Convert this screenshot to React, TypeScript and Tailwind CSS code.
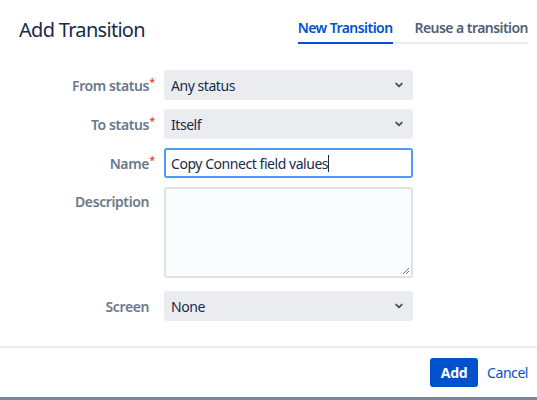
import { ReactNode } from "react";

const font = { fontFamily: '"Noto Sans", "Segoe UI", sans-serif' };

function Chevron() {
  return (
    <svg width="10" height="10" viewBox="0 0 10 10" className="shrink-0">
      <path
        d="M2.2 3.6 L5 6.4 L7.8 3.6"
        fill="none"
        stroke="#42526e"
        strokeWidth="1.9"
        strokeLinecap="round"
        strokeLinejoin="round"
      />
    </svg>
  );
}

function Row(props: {
  label: string;
  required?: boolean;
  top?: boolean;
  className?: string;
  children: ReactNode;
}) {
  const { label, required, top, className, children } = props;
  return (
    <div className={`flex ${top ? "items-start" : "items-center"} ${className ?? ""}`}>
      <div
        className={`w-[149px] text-right text-[14px] font-semibold tracking-[-0.4px] text-[#6b778c] ${top ? "pt-[4px]" : ""}`}
      >
        <span className="relative">
          {label}
          {required && (
            <span className="absolute -right-[6px] -top-[2px] text-[11px] font-normal text-[#de350b]">
              *
            </span>
          )}
        </span>
      </div>
      <div className="ml-[15px] w-[249px]">{children}</div>
    </div>
  );
}

function Select({ value }: { value: string }) {
  return (
    <div className="flex h-[30px] items-center justify-between rounded-[3px] bg-[#ebecf0] pl-[7px] pr-[9px] text-[14px] tracking-[-0.45px] text-[#172b4d]">
      <span>{value}</span>
      <Chevron />
    </div>
  );
}

export default function App() {
  return (
    <div className="flex h-[400px] w-[537px] flex-col bg-white" style={font}>
      <div className="flex h-[70px] items-start justify-between pl-[19px] pr-[9px]">
        <h2 className="pt-[16px] text-[20px] leading-[28px] tracking-[-0.7px] text-[#172b4d]">
          Add Transition
        </h2>
        <div className="mt-[18px] flex gap-[22px] border-b-2 border-[#ebecf0]">
          <div className="-mb-[2px] border-b-2 border-[#0052cc] pb-[4px] text-[14px] font-semibold leading-[20px] tracking-[-0.55px] text-[#0052cc]">
            New Transition
          </div>
          <div className="pb-[4px] text-[14px] font-semibold leading-[20px] tracking-[-0.55px] text-[#505f79]">
            Reuse a transition
          </div>
        </div>
      </div>

      <div className="flex flex-col">
        <Row label="From status" required>
          <Select value="Any status" />
        </Row>
        <Row label="To status" required className="mt-[9px]">
          <Select value="Itself" />
        </Row>
        <Row label="Name" required className="mt-[9px]">
          <div className="flex h-[30px] items-center rounded-[3px] border-2 border-[#4c9aff] bg-white pl-[5px] text-[14px] tracking-[-0.45px] text-[#172b4d]">
            <span>Copy Connect field values</span>
            <span className="h-[17px] w-px bg-[#172b4d]" />
          </div>
        </Row>
        <Row label="Description" top className="mt-[9px]">
          <div className="relative h-[91px] rounded-[3px] border-2 border-[#dfe1e6] bg-[#fafbfc]">
            <svg width="8" height="8" viewBox="0 0 8 8" className="absolute bottom-[1px] right-[1px]">
              <path d="M7 1 L1 7 M7 4 L4 7" stroke="#6b778c" strokeWidth="1" />
            </svg>
          </div>
        </Row>
        <Row label="Screen" className="mt-[13px]">
          <Select value="None" />
        </Row>
      </div>

      <div className="mt-[25px] flex items-center justify-end gap-[9px] border-t-2 border-[#ebecf0] pr-[9px] pt-[10px]">
        <button className="h-[29px] w-[48px] rounded-[3px] bg-[#0052cc] text-[14px] font-bold tracking-[-0.3px] text-white">
          Add
        </button>
        <button className="text-[14px] tracking-[-0.45px] text-[#0052cc]">Cancel</button>
      </div>
      <div className="flex-1" />
      <div className="h-[3px] bg-[#7a869a]" />
    </div>
  );
}
